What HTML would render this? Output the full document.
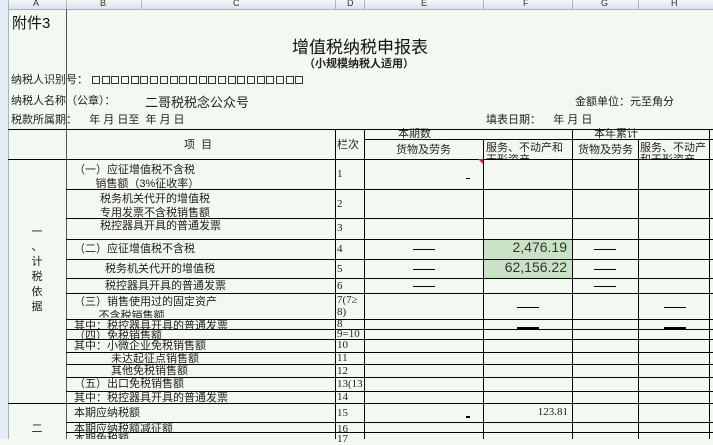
<!DOCTYPE html><html><head><meta charset="utf-8"><style>
body{margin:0;width:713px;height:439px;overflow:hidden;background:#f3f8f1;position:relative;font-family:"Liberation Sans","Noto Sans CJK SC",sans-serif;color:#222}
div{position:absolute;white-space:nowrap}
.t{font-size:11px;line-height:12px}
.h{background:#000;height:1px}
.v{background:#000;width:1px}
.n{font-family:"Liberation Serif",serif;font-size:11px}
.d{background:#000;height:1px;width:22px}
.bx{display:inline-block;width:8px;height:8px;border:1px solid #333;margin-right:1.7px;box-sizing:border-box}
</style></head><body>
<div style="left:0;top:0;width:713px;height:9px;background:linear-gradient(#f4f6f8,#dde3ea);border-bottom:1px solid #a9b4c2"></div>
<div style="left:0;top:0;width:8px;height:439px;background:#e4ecf5;border-right:1px solid #a9b4c2"></div>
<div class="t" style="left:33px;top:-3px;font-size:9px;color:#333">A</div>
<div class="t" style="left:100px;top:-3px;font-size:9px;color:#333">B</div>
<div class="t" style="left:233px;top:-3px;font-size:9px;color:#333">C</div>
<div class="t" style="left:347px;top:-3px;font-size:9px;color:#333">D</div>
<div class="t" style="left:421px;top:-3px;font-size:9px;color:#333">E</div>
<div class="t" style="left:523px;top:-3px;font-size:9px;color:#333">F</div>
<div class="t" style="left:601px;top:-3px;font-size:9px;color:#333">G</div>
<div class="t" style="left:671px;top:-3px;font-size:9px;color:#333">H</div>
<div style="left:66px;top:0;width:1px;height:9px;background:#a9b4c2"></div>
<div style="left:141px;top:0;width:1px;height:9px;background:#a9b4c2"></div>
<div style="left:335px;top:0;width:1px;height:9px;background:#a9b4c2"></div>
<div style="left:364px;top:0;width:1px;height:9px;background:#a9b4c2"></div>
<div style="left:483px;top:0;width:1px;height:9px;background:#a9b4c2"></div>
<div style="left:572px;top:0;width:1px;height:9px;background:#a9b4c2"></div>
<div style="left:638px;top:0;width:1px;height:9px;background:#a9b4c2"></div>

<div style="left:12px;top:12px;font-size:15px;color:#111">附件3</div>
<div style="left:292px;top:33px;font-size:17px;color:#111">增值税纳税申报表</div>
<div style="left:304px;top:55px;font-size:11px;font-weight:bold">（小规模纳税人适用）</div>
<div class="t" style="left:11px;top:74px">纳税人识别号：</div>
<div style="left:92px;top:76px;font-size:0;line-height:0"><span class="bx"></span><span class="bx"></span><span class="bx"></span><span class="bx"></span><span class="bx"></span><span class="bx"></span><span class="bx"></span><span class="bx"></span><span class="bx"></span><span class="bx"></span><span class="bx"></span><span class="bx"></span><span class="bx"></span><span class="bx"></span><span class="bx"></span><span class="bx"></span><span class="bx"></span><span class="bx"></span><span class="bx"></span><span class="bx"></span><span class="bx"></span><span class="bx"></span></div>
<div class="t" style="left:11px;top:95px">纳税人名称（公章）：</div>
<div style="left:145px;top:92px;font-size:13px">二哥税税念公众号</div>
<div class="t" style="left:11px;top:114px">税款所属期：&nbsp;&nbsp;&nbsp; 年 月 日至 &nbsp;年 月 日</div>
<div class="t" style="left:575px;top:96px">金额单位：元至角分</div>
<div class="t" style="left:486px;top:114px">填表日期： &nbsp; &nbsp;年 月 日</div>

<div class="v" style="left:66px;top:9px;height:430px;background:#555"></div>
<div class="h" style="left:8px;top:129px;width:705px"></div>
<div class="h" style="left:364px;top:139px;width:349px"></div>
<div class="h" style="left:8px;top:159px;width:705px"></div>
<div class="v" style="left:335px;top:129px;height:310px"></div>
<div class="v" style="left:364px;top:129px;height:310px"></div>
<div class="v" style="left:483px;top:139px;height:300px"></div>
<div class="v" style="left:572px;top:129px;height:310px"></div>
<div class="v" style="left:638px;top:139px;height:300px"></div>
<div class="v" style="left:709px;top:129px;height:310px"></div>
<div class="h" style="left:66px;top:189px;width:647px"></div>
<div class="h" style="left:66px;top:218px;width:647px"></div>
<div class="h" style="left:66px;top:239px;width:647px"></div>
<div class="h" style="left:66px;top:259px;width:647px"></div>
<div class="h" style="left:66px;top:278px;width:647px"></div>
<div class="h" style="left:66px;top:293px;width:647px"></div>
<div class="h" style="left:66px;top:319px;width:647px"></div>
<div class="h" style="left:66px;top:329px;width:647px"></div>
<div class="h" style="left:66px;top:339px;width:647px"></div>
<div class="h" style="left:66px;top:352px;width:647px"></div>
<div class="h" style="left:66px;top:364px;width:647px"></div>
<div class="h" style="left:66px;top:377px;width:647px"></div>
<div class="h" style="left:66px;top:391px;width:647px"></div>
<div class="h" style="left:8px;top:403px;width:705px"></div>
<div class="h" style="left:66px;top:422px;width:647px"></div>
<div class="h" style="left:66px;top:432px;width:647px"></div>
<div style="left:484px;top:240px;width:88px;height:38px;background:#c9e2c6"></div>
<div class="h" style="left:483px;top:259px;width:89px"></div>

<div class="t" style="left:184px;top:139px">项 &nbsp;目</div>
<div class="t" style="left:337px;top:139px">栏次</div>
<div class="t" style="left:398px;top:128px;height:11px;overflow:hidden">本期数</div>
<div class="t" style="left:594px;top:128px;height:11px;overflow:hidden">本年累计</div>
<div class="t" style="left:396px;top:144px">货物及劳务</div>
<div class="t" style="left:486px;top:142px;height:17px;overflow:hidden">服务、不动产和<br>无形资产</div>
<div class="t" style="left:578px;top:144px">货物及劳务</div>
<div class="t" style="left:640px;top:142px;height:17px;overflow:hidden">服务、不动产<br>和无形资产</div>

<div class="t" style="left:74px;top:163px;line-height:14px">（一）应征增值税不含税<br>&nbsp;&nbsp;&nbsp;&nbsp;&nbsp;&nbsp;&nbsp;销售额（3%征收率）</div>
<div class="t" style="left:100px;top:192px;line-height:14px">税务机关代开的增值税<br>专用发票不含税销售额</div>
<div class="t" style="left:100px;top:220px">税控器具开具的普通发票</div>
<div class="t" style="left:74px;top:241px;height:17px;overflow:hidden;line-height:16px">（二）应征增值税不含税<br>&nbsp;&nbsp;&nbsp;&nbsp;&nbsp;&nbsp;&nbsp;销售额（5%征收率）</div>
<div class="t" style="left:105px;top:262px;height:16px;overflow:hidden;line-height:15px">税务机关代开的增值税<br>专用发票不含税销售额</div>
<div class="t" style="left:105px;top:280px">税控器具开具的普通发票</div>
<div class="t" style="left:74px;top:295px;height:23px;overflow:hidden;line-height:14px">（三）销售使用过的固定资产<br>&nbsp;&nbsp;&nbsp;&nbsp;&nbsp;&nbsp;&nbsp;&nbsp;不含税销售额</div>
<div class="t" style="left:74px;top:320px;height:9px;overflow:hidden">其中：税控器具开具的普通发票</div>
<div class="t" style="left:74px;top:330px;height:9px;overflow:hidden">（四）免税销售额</div>
<div class="t" style="left:74px;top:340px">其中：小微企业免税销售额</div>
<div class="t" style="left:111px;top:353px">未达起征点销售额</div>
<div class="t" style="left:111px;top:365px">其他免税销售额</div>
<div class="t" style="left:74px;top:378px">（五）出口免税销售额</div>
<div class="t" style="left:74px;top:392px;height:11px;overflow:hidden">其中：税控器具开具的普通发票</div>
<div class="t" style="left:74px;top:407px">本期应纳税额</div>
<div class="t" style="left:74px;top:423px;height:9px;overflow:hidden">本期应纳税额减征额</div>
<div class="t" style="left:74px;top:433px;height:6px;overflow:hidden">本期免税额</div>

<div class="t" style="left:30px;top:225px;text-align:center;width:14px;line-height:15px">一<br>、<br>计<br>税<br>依<br>据</div>
<div class="t" style="left:30px;top:423px;text-align:center;width:14px">二</div>

<div class="n" style="left:337px;top:168px">1</div>
<div class="n" style="left:337px;top:198px">2</div>
<div class="n" style="left:337px;top:222px">3</div>
<div class="n" style="left:337px;top:243px">4</div>
<div class="n" style="left:337px;top:263px">5</div>
<div class="n" style="left:337px;top:280px">6</div>
<div class="n" style="left:337px;top:294px;line-height:12px">7(7≥<br>8)</div>
<div class="n" style="left:337px;top:318px;height:10px;overflow:hidden">8</div>
<div class="n" style="left:337px;top:328px;height:10px;overflow:hidden">9=10</div>
<div class="n" style="left:337px;top:339px">10</div>
<div class="n" style="left:337px;top:352px">11</div>
<div class="n" style="left:337px;top:365px">12</div>
<div class="n" style="left:337px;top:378px">13(13</div>
<div class="n" style="left:337px;top:391px">14</div>
<div class="n" style="left:337px;top:407px">15</div>
<div class="n" style="left:337px;top:423px">16</div>
<div class="n" style="left:337px;top:433px">17</div>

<div style="left:478px;top:159px;width:0;height:0;border-top:5px solid #d22;border-left:5px solid transparent"></div>
<div class="h" style="left:466px;top:178px;width:4px"></div>
<div class="d" style="left:413px;top:249px"></div>
<div class="d" style="left:594px;top:249px"></div>
<div class="d" style="left:413px;top:269px"></div>
<div class="d" style="left:594px;top:269px"></div>
<div class="d" style="left:413px;top:286px"></div>
<div class="d" style="left:594px;top:286px"></div>
<div class="d" style="left:517px;top:307px"></div>
<div class="d" style="left:664px;top:307px"></div>
<div class="d" style="left:517px;top:327px;height:2px"></div>
<div class="d" style="left:664px;top:327px;height:2px"></div>
<div style="left:490px;top:239px;width:77px;text-align:right;font-size:14px;color:#333">2,476.19</div>
<div style="left:480px;top:259px;width:87px;text-align:right;font-size:14px;color:#333">62,156.22</div>
<div class="h" style="left:466px;top:416px;width:4px;height:2px"></div>
<div class="n" style="left:520px;top:406px;width:48px;text-align:right">123.81</div>
</body></html>
